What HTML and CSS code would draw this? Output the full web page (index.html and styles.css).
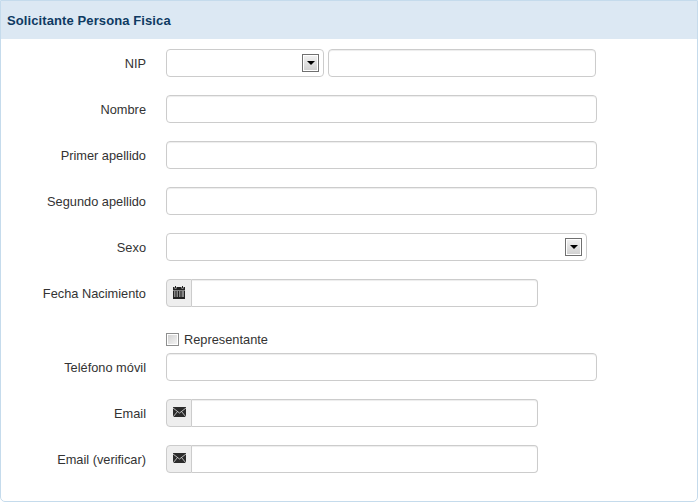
FILE: index.html
```html
<!DOCTYPE html>
<html lang="es">
<head>
  <meta charset="UTF-8" />
  <title>Solicitante Persona Fisica</title>
  <link rel="stylesheet" href="styles.css">
</head>
<body>

<div class="panel">
  <div class="panel-heading">Solicitante Persona Fisica</div>
  <form class="panel-body">

    <div class="row">
      <label class="row-label">NIP</label>
      <div class="select-wrap select-nip">
        <select></select>
        <span class="select-btn"><span class="select-arrow"></span></span>
      </div>
      <input type="text" class="field field-nip" />
    </div>

    <div class="row">
      <label class="row-label">Nombre</label>
      <input type="text" class="field field-full" />
    </div>

    <div class="row">
      <label class="row-label">Primer apellido</label>
      <input type="text" class="field field-full" />
    </div>

    <div class="row">
      <label class="row-label">Segundo apellido</label>
      <input type="text" class="field field-full" />
    </div>

    <div class="row">
      <label class="row-label">Sexo</label>
      <div class="select-wrap select-sexo">
        <select></select>
        <span class="select-btn"><span class="select-arrow"></span></span>
      </div>
    </div>

    <div class="row">
      <label class="row-label">Fecha Nacimiento</label>
      <div class="input-group">
        <span class="addon">
          <svg class="icon-cal" width="12" height="13" viewBox="0 0 12 13">
            <path fill="#222" d="M2 0h1v2H2zM9 0h1v2H9zM0 1h1.500v1.500h2V1h5v1.500h2V1H12v3H0z"/>
            <path fill="#222" fill-rule="evenodd" d="M0 4.500h12V13H0zM1 5.500v1h1.500v-1zM3.500 5.500v1H5v-1zM6 5.500v1h1.500v-1zM8.500 5.500v1H11v-1zM1 7.500v1h1.500v-1zM3.500 7.500v1H5v-1zM6 7.500v1h1.500v-1zM8.500 7.500v1H11v-1zM1 9.500v1h1.500v-1zM3.500 9.500v1H5v-1zM6 9.500v1h1.500v-1zM8.500 9.500v1H11v-1z"/>
          </svg>
        </span>
        <input type="text" class="group-input" />
      </div>
    </div>

    <div class="row-check">
      <input type="checkbox" class="check" id="representante" />
      <label for="representante">Representante</label>
    </div>

    <div class="row">
      <label class="row-label">Teléfono móvil</label>
      <input type="text" class="field field-full" />
    </div>

    <div class="row">
      <label class="row-label">Email</label>
      <div class="input-group">
        <span class="addon">
          <svg class="icon-mail" width="13" height="10" viewBox="0 0 13 10">
            <rect width="13" height="10" fill="#2b2b2b"/>
            <path fill="none" stroke="#ddd" stroke-width="0.8" d="M0 1l6.500 5L13 1M0 10l4.500-5.500M13 10L8.500 4.500"/>
          </svg>
        </span>
        <input type="text" class="group-input" />
      </div>
    </div>

    <div class="row">
      <label class="row-label">Email (verificar)</label>
      <div class="input-group">
        <span class="addon">
          <svg class="icon-mail" width="13" height="10" viewBox="0 0 13 10">
            <rect width="13" height="10" fill="#2b2b2b"/>
            <path fill="none" stroke="#ddd" stroke-width="0.8" d="M0 1l6.500 5L13 1M0 10l4.500-5.500M13 10L8.500 4.500"/>
          </svg>
        </span>
        <input type="text" class="group-input" />
      </div>
    </div>

  </form>
</div>

</body>
</html>
```

FILE: styles.css
```css
* { box-sizing: border-box; }

body {
  margin: 0;
  background: white;
  font-family: "Liberation Sans", Arial, sans-serif;
  font-size: 13px;
  color: #333;
}

.panel {
  width: 698px;
  height: 502px;
  background: white;
  border: 1px solid #c5dbec;
  border-radius: 0 0 5px 5px;
  overflow: hidden;
}
.panel-heading {
  height: 38px;
  line-height: 39px;
  padding-left: 6px;
  background: #dce8f3;
  color: #0e3a62;
  font-weight: bold;
  letter-spacing: 0.1px;
}
.panel-body {
  padding-top: 10px;
  font-size: 12.8px;
}

.row {
  display: flex;
  align-items: center;
  height: 28px;
  margin-bottom: 18px;
}
.row-label {
  width: 145px;
  margin-right: 20px;
  text-align: right;
}

.field, .group-input, select {
  height: 28px;
  padding: 4px 8px;
  background: white;
  border: 1px solid #ccc;
  border-radius: 4px;
  box-shadow: inset 0 1px 1px rgba(0,0,0,0.075);
  font: inherit;
}
.field-full { width: 431px; }
.field-nip { width: 268px; margin-left: 4px; }

.select-wrap { position: relative; height: 28px; }
.select-wrap select {
  display: block;
  width: 100%;
  appearance: none;
  box-shadow: none;
}
.select-nip { width: 158px; }
.select-sexo { width: 421px; }
.select-btn {
  position: absolute;
  top: 5px;
  right: 5px;
  width: 17px;
  height: 18px;
  display: flex;
  align-items: center;
  justify-content: center;
  border: 1px solid #707070;
  box-shadow: inset 0 0 0 1px #fff;
  background: linear-gradient(#f2f2f2, #cfcfcf);
}
.select-arrow {
  border-top: 4px solid #000;
  border-left: 4px solid transparent;
  border-right: 4px solid transparent;
}

.input-group {
  display: flex;
  width: 372px;
  height: 28px;
}
.addon {
  width: 26px;
  display: flex;
  align-items: center;
  justify-content: center;
  background: #eee;
  border: 1px solid #ccc;
  border-radius: 4px 0 0 4px;
}
.icon-mail { margin-bottom: 2px; }
.icon-cal { margin-bottom: 1px; }
.group-input {
  flex: 1;
  min-width: 0;
  border-left: none;
  border-radius: 0 4px 4px 0;
}

.row-check {
  display: flex;
  align-items: center;
  height: 21px;
  padding: 7px 0 0 165px;
  margin-bottom: 7px;
}
.check {
  appearance: none;
  width: 13px;
  height: 13px;
  margin: 0 5px 0 0;
  border: 1px solid #8e8f8f;
  box-shadow: inset 0 0 0 1px #fff;
  background: linear-gradient(135deg, #cfcfcf, #f6f6f6);
}
```
